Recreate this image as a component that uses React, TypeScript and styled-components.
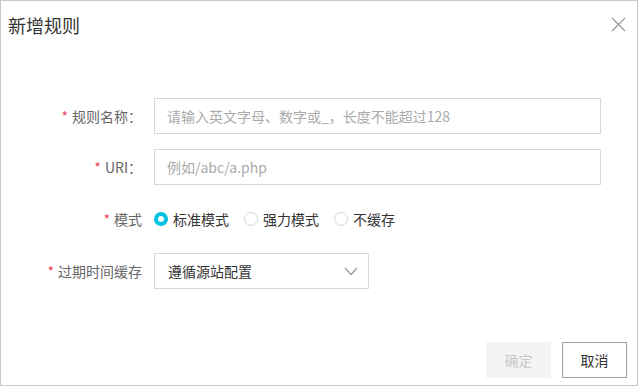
import React from "react";
import styled, { createGlobalStyle } from "styled-components";

const Global = createGlobalStyle`
  html, body { margin: 0; padding: 0; background: #fff; }
  body { font-family: "Noto Sans CJK SC", "Liberation Sans", sans-serif; }
  * { box-sizing: border-box; }
`;

const Dialog = styled.div`
  width: 638px;
  height: 386px;
  border: 1px solid #c8c8c8;
  display: flex;
  flex-direction: column;
  background: #fff;
`;

const Header = styled.div`
  height: 50px;
  display: flex;
  align-items: flex-start;
  justify-content: space-between;
  padding: 11px 11px 0 7px;
`;

const Title = styled.h1`
  margin: 0;
  font-size: 18px;
  line-height: 27px;
  font-weight: 400;
  color: #333;
`;

const Close = styled.button`
  width: 16px;
  height: 16px;
  padding: 0;
  margin-top: 4px;
  border: none;
  background: none;
  display: flex;
  align-items: center;
  justify-content: center;
  cursor: pointer;
`;

const Form = styled.div`
  margin-top: 47px;
  display: flex;
  flex-direction: column;
  gap: 15px;
`;

const Row = styled.div<{ $h?: number }>`
  display: flex;
  align-items: center;
  height: ${(p) => p.$h ?? 36}px;
`;

const Label = styled.label`
  width: 141px;
  margin-right: 12px;
  text-align: right;
  font-size: 14px;
  color: #666;
  white-space: nowrap;
`;

const Star = styled.span`
  color: #f0435a;
  margin-right: 4px;
`;

const Input = styled.input`
  width: 447px;
  height: 36px;
  border: 1px solid #d9d9d9;
  padding: 0 12px;
  font-size: 14px;
  font-family: inherit;
  color: #333;
  outline: none;
  &::placeholder { color: #aaa; }
`;

const RadioGroup = styled.div`
  display: flex;
  align-items: center;
`;

const RadioItem = styled.span`
  display: flex;
  align-items: center;
  margin-right: 15px;
  font-size: 14px;
  color: #333;
`;

const Circle = styled.span<{ $on?: boolean }>`
  width: 14px;
  height: 14px;
  border-radius: 50%;
  background: #fff;
  border: ${(p) => (p.$on ? "4px solid #00c1de" : "1px solid #d4d4d4")};
  margin-right: 5px;
`;

const Select = styled.div`
  width: 215px;
  height: 36px;
  border: 1px solid #d9d9d9;
  display: flex;
  align-items: center;
  justify-content: space-between;
  padding: 0 10px 0 13px;
  font-size: 14px;
  color: #333;
`;

const Footer = styled.div`
  margin-top: auto;
  display: flex;
  justify-content: flex-end;
  gap: 11px;
  padding: 0 10px 7px 0;
`;

const Button = styled.button<{ $disabled?: boolean }>`
  width: 65px;
  height: 36px;
  font-size: 14px;
  font-family: inherit;
  background: ${(p) => (p.$disabled ? "#f4f4f4" : "#fff")};
  color: ${(p) => (p.$disabled ? "#c8c8c8" : "#333")};
  border: 1px solid ${(p) => (p.$disabled ? "#f4f4f4" : "#a0a0a0")};
  padding: 0;
  cursor: pointer;
`;

export default function App() {
  return (
    <>
      <Global />
      <Dialog>
        <Header>
          <Title>新增规则</Title>
          <Close aria-label="close">
            <svg width="15" height="15" viewBox="0 0 15 15">
              <path d="M1 1 L14 14 M14 1 L1 14" stroke="#999" strokeWidth="1.2" fill="none" />
            </svg>
          </Close>
        </Header>
        <Form>
          <Row>
            <Label><Star>*</Star>规则名称：</Label>
            <Input placeholder="请输入英文字母、数字或_，长度不能超过128" />
          </Row>
          <Row>
            <Label><Star>*</Star>URI：</Label>
            <Input placeholder="例如/abc/a.php" />
          </Row>
          <Row $h={38}>
            <Label><Star>*</Star>模式</Label>
            <RadioGroup>
              <RadioItem><Circle $on />标准模式</RadioItem>
              <RadioItem><Circle />强力模式</RadioItem>
              <RadioItem><Circle />不缓存</RadioItem>
            </RadioGroup>
          </Row>
          <Row>
            <Label><Star>*</Star>过期时间缓存</Label>
            <Select>
              <span>遵循源站配置</span>
              <svg width="14" height="9" viewBox="0 0 14 9">
                <path d="M1 1 L7 7.5 L13 1" stroke="#8c9aa8" strokeWidth="1.2" fill="none" />
              </svg>
            </Select>
          </Row>
        </Form>
        <Footer>
          <Button $disabled>确定</Button>
          <Button>取消</Button>
        </Footer>
      </Dialog>
    </>
  );
}
